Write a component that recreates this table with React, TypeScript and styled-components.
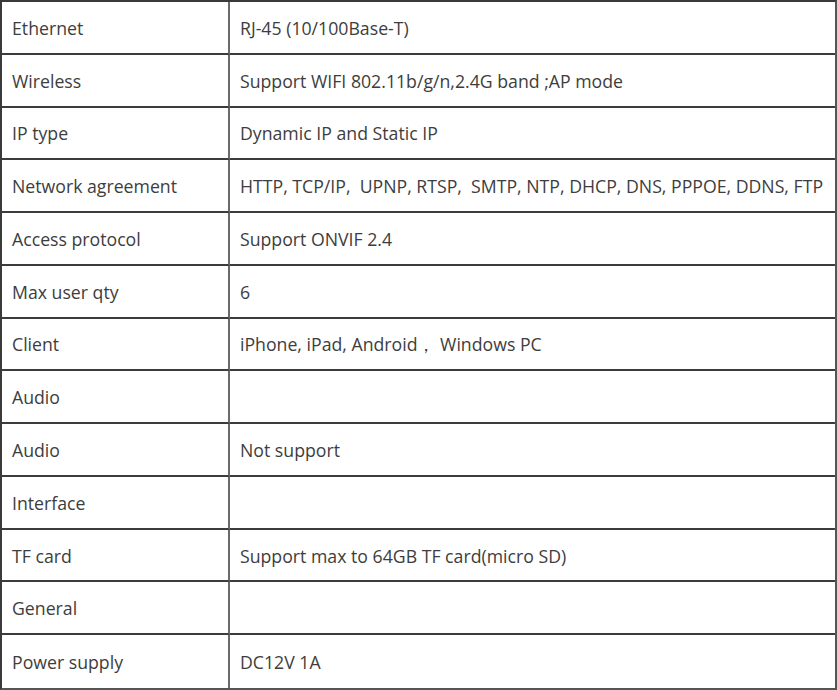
import React from "react";
import styled, { createGlobalStyle } from "styled-components";

const Global = createGlobalStyle`
  html, body { margin: 0; padding: 0; background: #ffffff; }
  body { font-family: "Open Sans", "Noto Sans", sans-serif; }
`;

const Table = styled.div`
  width: 837px;
  height: 690px;
  box-sizing: border-box;
  border-top: 2px solid #3a3a3a;
  border-left: 2px solid #3a3a3a;
  border-right: 2px solid #555;
  border-bottom: 2px solid #555;
  display: grid;
  grid-template-columns: 228px 1fr;
  grid-auto-rows: 1fr;
`;

const Cell = styled.div<{ $first?: boolean; $last?: boolean }>`
  display: flex;
  align-items: center;
  padding-left: 10px;
  padding-top: 1px;
  border-bottom: ${(p) => (p.$last ? "none" : "2px solid #3c3c3c")};
  border-right: ${(p) => (p.$first ? "2px solid #6a6a6a" : "none")};
  font-size: 17.7px;
  color: #3d3d3d;
  white-space: pre;
  box-sizing: border-box;
`;

const rows: [string, string][] = [
  ["Ethernet", "RJ-45 (10/100Base-T)"],
  ["Wireless", "Support WIFI 802.11b/g/n,2.4G band ;AP mode"],
  ["IP type", "Dynamic IP and Static IP"],
  ["Network agreement", "HTTP, TCP/IP,  UPNP, RTSP,  SMTP, NTP, DHCP, DNS, PPPOE, DDNS, FTP"],
  ["Access protocol", "Support ONVIF 2.4"],
  ["Max user qty", "6"],
  ["Client", "iPhone, iPad, Android\uFF0C Windows PC"],
  ["Audio", ""],
  ["Audio", "Not support"],
  ["Interface", ""],
  ["TF card", "Support max to 64GB TF card(micro SD)"],
  ["General", ""],
  ["Power supply", "DC12V 1A"],
];

export default function App() {
  return (
    <>
      <Global />
      <Table>
        {rows.map(([k, v], i) => (
          <React.Fragment key={i}>
            <Cell $first $last={i === rows.length - 1}>{k}</Cell>
            <Cell $last={i === rows.length - 1}>{v}</Cell>
          </React.Fragment>
        ))}
      </Table>
    </>
  );
}
